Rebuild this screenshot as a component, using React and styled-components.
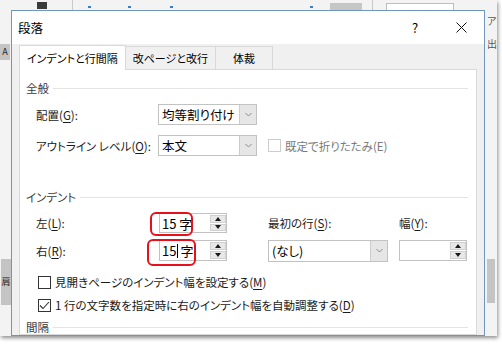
import React from 'react';
import styled, { createGlobalStyle } from 'styled-components';

const GlobalStyle = createGlobalStyle`
  html, body {
    margin: 0;
    padding: 0;
    background: #fff;
  }
  body {
    font-family: "Noto Sans CJK JP", "Noto Sans", sans-serif;
    font-feature-settings: "palt";
    color: #1a1a1a;
  }
`;

const Page = styled.div`
  width: 502px;
  height: 345px;
  background: #fff;
  overflow: hidden;
`;

/* the captured screen behind the dialog */
const Shot = styled.div`
  position: relative;
  width: 497px;
  height: 336px;
  box-sizing: border-box;
  padding: 10px 12px 0 11px;
  background: #f3f3f3;
  box-shadow: 1px 2px 4px rgba(0, 0, 0, 0.45);
  overflow: hidden;
`;

const RibbonDark = styled.div`
  position: absolute;
  left: 37px;
  top: 2px;
  width: 10px;
  height: 7px;
  background: #3a3a3a;
`;

const RibbonRule = styled.div`
  position: absolute;
  left: ${({ $x }) => $x}px;
  top: 0;
  width: 1px;
  height: 10px;
  background: #c9c9c9;
`;

const RibbonDot = styled.div`
  position: absolute;
  left: ${({ $x }) => $x}px;
  top: 6px;
  width: 3px;
  height: 2px;
  background: #3b7fc4;
`;

const RibbonGrayBox = styled.div`
  position: absolute;
  left: 330px;
  top: 3px;
  width: 32px;
  height: 8px;
  background: #c6c6c6;
`;

const RibbonField = styled.div`
  position: absolute;
  left: 386px;
  top: 3px;
  width: 66px;
  height: 8px;
  background: #fff;
  border: 1px solid #bdbdbd;
`;

const SideBand = styled.div`
  position: absolute;
  left: ${({ $x }) => $x}px;
  top: ${({ $y }) => $y}px;
  width: ${({ $w }) => $w}px;
  height: ${({ $h }) => $h}px;
  background: #c4c4c4;
  color: #222;
  font-size: 9px;
  line-height: ${({ $h }) => $h}px;
  text-align: center;
`;

const SideGlyph = styled.div`
  position: absolute;
  left: ${({ $x }) => $x}px;
  top: ${({ $y }) => $y}px;
  font-size: 10px;
  line-height: 12px;
  color: #555;
`;

const Dialog = styled.div`
  position: relative;
  z-index: 1;
  width: 474px;
  height: 326px;
  box-sizing: border-box;
  border: 1px solid #7196bb;
  background: #f0f0f0;
  display: flex;
  flex-direction: column;
  overflow: hidden;
`;

const TitleBar = styled.div`
  flex: none;
  height: 33px;
  background: #fff;
  display: flex;
  align-items: center;
  padding-left: 6px;
`;

const Title = styled.div`
  flex: 1;
  font-size: 12.5px;
  color: #000;
`;

const CaptionButton = styled.div`
  width: 46px;
  height: 33px;
  display: flex;
  align-items: center;
  justify-content: center;
  font-size: 13px;
  color: #000;
`;

const Body = styled.div`
  flex: 1;
  display: flex;
  flex-direction: column;
  padding: 1px 7px 0;
  min-height: 0;
`;

const TabRow = styled.div`
  flex: none;
  height: 24px;
  display: flex;
  align-items: flex-end;
  position: relative;
  z-index: 1;
`;

const Tab = styled.div`
  box-sizing: border-box;
  height: ${({ $active }) => ($active ? '25px' : '23px')};
  margin-bottom: ${({ $active }) => ($active ? '-1px' : '0')};
  min-width: 57px;
  padding: ${({ $active }) => ($active ? '0 7px 1px' : '0 7px')};
  display: flex;
  align-items: center;
  justify-content: center;
  font-size: 11px;
  color: #000;
  background: ${({ $active }) => ($active ? '#fff' : '#f0f0f0')};
  border: 1px solid #d9d9d9;
  border-bottom: none;
  & + & {
    border-left: ${({ $active }) => ($active ? '1px solid #d9d9d9' : 'none')};
  }
`;

const Panel = styled.div`
  flex: 1;
  background: #fff;
  border: 1px solid #d9d9d9;
  padding: 10px 8px 0 6px;
  display: flex;
  flex-direction: column;
  min-height: 0;
`;

const Heading = styled.div`
  display: flex;
  align-items: center;
  height: 16px;
  font-size: 11.5px;
  color: #3c3c3c;
  margin-top: ${({ $top }) => $top || 0}px;
  &::after {
    content: '';
    flex: 1;
    height: 1px;
    margin-left: 4px;
    background: #e3e3e3;
  }
`;

const GeneralGrid = styled.div`
  display: grid;
  grid-template-columns: 122px 99px auto;
  grid-auto-rows: 21px;
  row-gap: 10px;
  align-items: center;
  margin: 8px 0 0 10px;
`;

const IndentGrid = styled.div`
  display: grid;
  grid-template-columns: 123px 109px 131px 68px;
  grid-template-rows: 20px 21px;
  row-gap: 7px;
  align-items: center;
  justify-items: start;
  margin: 8px 0 0 10px;
`;

const Label = styled.div`
  font-size: 11.5px;
  color: #1a1a1a;
  white-space: nowrap;
  u {
    text-decoration-thickness: 1px;
    text-underline-offset: 2px;
  }
`;

const Select = styled.div`
  box-sizing: border-box;
  width: ${({ $w }) => $w}px;
  height: ${({ $h }) => $h || 21}px;
  display: flex;
  background: #fff;
  border: 1px solid #c2c2c2;
`;

const SelectValue = styled.div`
  flex: 1;
  padding-left: 3px;
  display: flex;
  align-items: center;
  font-size: 12.5px;
  color: #000;
  white-space: nowrap;
  overflow: hidden;
`;

const DropButton = styled.div`
  width: 16px;
  display: flex;
  align-items: center;
  justify-content: center;
  background: #e6e6e6;
  border-left: 1px solid #cdcdcd;
`;

const CheckRow = styled.div`
  display: flex;
  align-items: center;
  height: 16px;
  margin: ${({ $top }) => $top || 0}px 0 0 ${({ $left }) => $left || 0}px;
  font-size: 11.5px;
  color: ${({ $disabled }) => ($disabled ? '#7a7a7a' : '#1a1a1a')};
  white-space: nowrap;
  u {
    text-decoration-thickness: 1px;
    text-underline-offset: 2px;
  }
`;

const Box = styled.div`
  box-sizing: border-box;
  width: 13px;
  height: 13px;
  margin-right: 4px;
  background: #fff;
  border: 1px solid ${({ $disabled }) => ($disabled ? '#cccccc' : '#333')};
  display: flex;
  align-items: center;
  justify-content: center;
`;

const Spin = styled.div`
  position: relative;
  box-sizing: border-box;
  width: 68px;
  height: ${({ $h }) => $h || 20}px;
  display: flex;
  background: #fff;
  border: 1px solid #c2c2c2;
`;

const SpinValue = styled.div`
  flex: 1;
  display: flex;
  align-items: center;
  padding-left: 2px;
  font-size: 13px;
  color: #000;
  white-space: pre;
  font-feature-settings: normal;
`;

const Caret = styled.span`
  display: inline-block;
  width: 1px;
  height: 14px;
  margin: 0 2px 0 1px;
  background: #000;
`;

const SpinButtons = styled.div`
  width: 16px;
  display: flex;
  flex-direction: column;
  gap: 1px;
  padding: 1px 0;
`;

const SpinButton = styled.div`
  flex: 1;
  display: flex;
  align-items: center;
  justify-content: center;
  background: #e8e8e8;
  border: 1px solid #d0d0d0;
`;

const Highlight = styled.div`
  position: absolute;
  left: ${({ $l }) => $l}px;
  top: ${({ $t }) => $t}px;
  width: ${({ $w }) => $w}px;
  height: ${({ $h }) => $h}px;
  border: 2px solid #e8101a;
  border-radius: 6px;
  box-sizing: border-box;
  pointer-events: none;
`;

const Chevron = () => (
  <svg width="7" height="5" viewBox="0 0 7 5">
    <path d="M0.5 1 L3.5 4 L6.5 1" fill="none" stroke="#8a8a8a" strokeWidth="1" />
  </svg>
);

const Tri = ({ down }) => (
  <svg width="6" height="4" viewBox="0 0 6 4">
    <path d={down ? 'M0 0 H6 L3 4 Z' : 'M0 4 H6 L3 0 Z'} fill="#1a1a1a" />
  </svg>
);

const SpinBox = ({ children, h, mark }) => (
  <Spin $h={h}>
    <SpinValue>{children}</SpinValue>
    <SpinButtons>
      <SpinButton><Tri /></SpinButton>
      <SpinButton><Tri down /></SpinButton>
    </SpinButtons>
    {mark && <Highlight $l={mark[0]} $t={mark[1]} $w={mark[2]} $h={mark[3]} />}
  </Spin>
);

const Dropdown = ({ value, w, h }) => (
  <Select $w={w} $h={h}>
    <SelectValue>{value}</SelectValue>
    <DropButton><Chevron /></DropButton>
  </Select>
);

const Check = () => (
  <svg width="11" height="9" viewBox="0 0 11 9">
    <path d="M1 4.5 L4 7.5 L10 1" fill="none" stroke="#333" strokeWidth="1.1" />
  </svg>
);

const Close = () => (
  <svg width="11" height="11" viewBox="0 0 11 11">
    <path d="M0.5 0.5 L10.5 10.5 M10.5 0.5 L0.5 10.5" stroke="#111" strokeWidth="1" />
  </svg>
);

export default function App() {
  return (
    <Page>
      <GlobalStyle />
      <Shot>
        <RibbonDark />
        <RibbonRule $x={72} />
        <RibbonRule $x={372} />
        <RibbonDot $x={88} />
        <RibbonDot $x={128} />
        <RibbonDot $x={170} />
        <RibbonDot $x={310} />
        <RibbonGrayBox />
        <RibbonField />
        <SideBand $x={0} $y={44} $w={10} $h={16}>A</SideBand>
        <SideBand $x={1} $y={259} $w={10} $h={46}>肩</SideBand>
        <SideBand $x={487} $y={259} $w={8} $h={44} />
        <SideGlyph $x={487} $y={15}>ア</SideGlyph>
        <SideGlyph $x={487} $y={38}>出</SideGlyph>

        <Dialog>
          <TitleBar>
            <Title>段落</Title>
            <CaptionButton>?</CaptionButton>
            <CaptionButton><Close /></CaptionButton>
          </TitleBar>
          <Body>
            <TabRow>
              <Tab $active>インデントと行間隔</Tab>
              <Tab>改ページと改行</Tab>
              <Tab>体裁</Tab>
            </TabRow>
            <Panel>
              <Heading>全般</Heading>
              <GeneralGrid>
                <Label>配置(<u>G</u>):</Label>
                <Dropdown value="均等割り付け" w={99} />
                <span />
                <Label>アウトライン レベル(<u>O</u>):</Label>
                <Dropdown value="本文" w={99} />
                <CheckRow $left={11} $disabled>
                  <Box $disabled />
                  既定で折りたたみ(E)
                </CheckRow>
              </GeneralGrid>

              <Heading $top={33}>インデント</Heading>
              <IndentGrid>
                <Label>左(<u>L</u>):</Label>
                <SpinBox h={20} mark={[-10, -2, 43, 24]}>15 字</SpinBox>
                <Label>最初の行(<u>S</u>):</Label>
                <Label>幅(<u>Y</u>):</Label>
                <Label>右(<u>R</u>):</Label>
                <SpinBox h={21} mark={[-13, -2, 49, 27]}>15<Caret />字</SpinBox>
                <Dropdown value="(なし)" w={120} h={22} />
                <SpinBox h={21} />
              </IndentGrid>

              <CheckRow $top={13} $left={12}>
                <Box />
                見開きページのインデント幅を設定する(<u>M</u>)
              </CheckRow>
              <CheckRow $top={7} $left={12}>
                <Box><Check /></Box>
                1 行の文字数を指定時に右のインデント幅を自動調整する(<u>D</u>)
              </CheckRow>

              <Heading $top={6}>間隔</Heading>
            </Panel>
          </Body>
        </Dialog>
      </Shot>
    </Page>
  );
}
